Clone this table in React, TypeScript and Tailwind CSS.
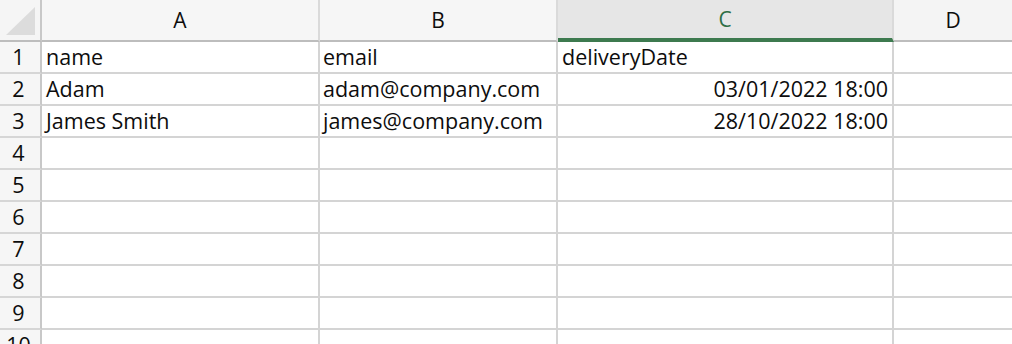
const columns = [
  { key: "A", width: "w-[278px]" },
  { key: "B", width: "w-[238px]" },
  { key: "C", width: "w-[336px]", active: true },
];

const rows: { a?: string; b?: string; c?: string; cAlign?: "left" | "right" }[] = [
  { a: "name", b: "email", c: "deliveryDate", cAlign: "left" },
  { a: "Adam", b: "adam@company.com", c: "03/01/2022 18:00", cAlign: "right" },
  { a: "James Smith", b: "james@company.com", c: "28/10/2022 18:00", cAlign: "right" },
  {},
  {},
  {},
  {},
  {},
  {},
  {},
];

export default function App() {
  return (
    <div
      className="h-[344px] w-[1012px] overflow-hidden bg-white text-[#0d0d0d]"
      style={{ fontFamily: '"Open Sans", "Liberation Sans", sans-serif' }}
    >
      {/* column letters */}
      <div className="flex h-[42px]">
        <div className="relative w-[42px] shrink-0 border-r-2 border-b-2 border-r-[#c8c8c8] border-b-[#bdbdbd] bg-[#f5f5f5]">
          <svg className="absolute left-0 top-0" width="40" height="40" viewBox="0 0 40 40">
            <polygon points="6,35 35,35 35,7" fill="#dcdcdc" />
          </svg>
        </div>
        {columns.map((col) => (
          <div
            key={col.key}
            className={
              col.active
                ? `${col.width} shrink-0 border-r-2 border-r-[#dadada] border-b-4 border-b-[#3d7a4f] bg-[#e6e6e6] text-center text-[21px] leading-[38px] text-[#2f6e44]`
                : `${col.width} shrink-0 border-r-2 border-b-2 border-r-[#dadada] border-b-[#bdbdbd] bg-[#f6f6f6] text-center text-[21px] leading-[40px]`
            }
          >
            {col.key}
          </div>
        ))}
        <div className="flex-1 border-b-2 border-b-[#bdbdbd] bg-[#f4f4f4] text-center text-[21px] leading-[40px]">
          D
        </div>
      </div>

      {/* sheet rows */}
      {rows.map((row, i) => (
        <div key={i} className="flex h-[32px] text-[21.5px] leading-[30px]">
          <div className="w-[42px] shrink-0 border-r-2 border-b-2 border-r-[#c8c8c8] border-b-[#d6d6d6] bg-[#f6f6f6] pr-[3px] text-center">
            {i + 1}
          </div>
          <div className="w-[278px] shrink-0 overflow-hidden whitespace-nowrap border-r-2 border-b-2 border-[#d4d4d4] px-[4px]">
            {row.a}
          </div>
          <div className="w-[238px] shrink-0 overflow-hidden whitespace-nowrap border-r-2 border-b-2 border-[#d4d4d4] px-[3px]">
            {row.b}
          </div>
          <div
            className={
              row.cAlign === "right"
                ? "w-[336px] shrink-0 overflow-hidden whitespace-nowrap border-r-2 border-b-2 border-[#d4d4d4] px-[4px] text-right"
                : "w-[336px] shrink-0 overflow-hidden whitespace-nowrap border-r-2 border-b-2 border-[#d4d4d4] px-[4px]"
            }
          >
            {row.c}
          </div>
          <div className="flex-1 border-b-2 border-[#d4d4d4]" />
        </div>
      ))}
    </div>
  );
}
